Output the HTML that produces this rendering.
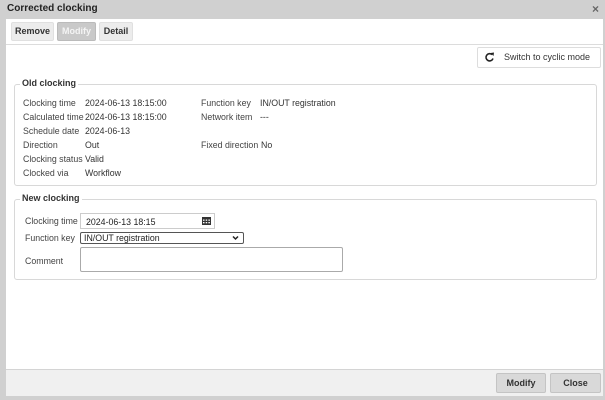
<!DOCTYPE html>
<html><head><style>
*{margin:0;padding:0;box-sizing:border-box}
body{width:605px;height:400px;background:#d0d0d0;font-family:"Liberation Sans",Arial,sans-serif;font-size:8.8px;color:#333;position:relative;overflow:hidden}
.a{position:absolute;white-space:nowrap}
.title{left:7px;top:3px;font-weight:bold;font-size:10px;color:#222}
.main{position:absolute;left:6px;top:19px;width:597px;height:350px;background:#fff}
.btn{position:absolute;background:#ececec;border:1px solid #e0e0e0;border-radius:2px;font-weight:bold;color:#333;text-align:center;line-height:17px;font-size:9px}
.fs{position:absolute;border:1px solid #d8d8d8;border-radius:3px}
.lg{position:absolute;background:#fff;padding:0 2px;font-weight:bold;color:#333;font-size:9px}
.lb{color:#444}
</style></head><body>
<div class="a title">Corrected clocking</div>
<div class="a" style="left:592px;top:2px;font-size:12px;font-weight:bold;color:#666">×</div>
<div class="main">
  <div class="btn" style="left:5px;top:3px;width:43px;height:19px">Remove</div>
  <div class="btn" style="left:51px;top:3px;width:39px;height:19px;background:#c9c9c9;border-color:#bbb;color:#f4f4f4">Modify</div>
  <div class="btn" style="left:93px;top:3px;width:34px;height:19px">Detail</div>
  <div style="position:absolute;left:0;top:25px;width:597px;height:1px;background:#dcdcdc"></div>
  <div class="btn" style="left:471px;top:28px;width:124px;height:21px;background:#fff;border-color:#ddd;font-weight:normal;line-height:19px;text-align:left;padding-left:26px;color:#333">Switch to cyclic mode</div>
  <svg class="a" style="left:478px;top:33px" width="12" height="11" viewBox="0 0 12 11"><path d="M9 6.5A3.6 3.6 0 1 1 8 2.6" fill="none" stroke="#222" stroke-width="1.6"/><path d="M6.5 1L10 0.5 9.5 4z" fill="#222"/></svg>
</div>
<div class="fs" style="left:14px;top:84px;width:583px;height:102px"></div>
<div class="a lg" style="left:20px;top:78px">Old clocking</div>
<div class="a lb" style="left:23px;top:98px">Clocking time</div><div class="a" style="left:85px;top:98px">2024-06-13 18:15:00</div>
<div class="a lb" style="left:23px;top:112px">Calculated time</div><div class="a" style="left:85px;top:112px">2024-06-13 18:15:00</div>
<div class="a lb" style="left:23px;top:126px">Schedule date</div><div class="a" style="left:85px;top:126px">2024-06-13</div>
<div class="a lb" style="left:23px;top:140px">Direction</div><div class="a" style="left:85px;top:140px">Out</div>
<div class="a lb" style="left:23px;top:154px">Clocking status</div><div class="a" style="left:85px;top:154px">Valid</div>
<div class="a lb" style="left:23px;top:168px">Clocked via</div><div class="a" style="left:85px;top:168px">Workflow</div>
<div class="a lb" style="left:201px;top:98px">Function key</div><div class="a" style="left:260px;top:98px">IN/OUT registration</div>
<div class="a lb" style="left:201px;top:112px">Network item</div><div class="a" style="left:260px;top:112px">---</div>
<div class="a lb" style="left:201px;top:140px">Fixed direction</div><div class="a" style="left:261px;top:140px">No</div>

<div class="fs" style="left:14px;top:199px;width:583px;height:81px"></div>
<div class="a lg" style="left:20px;top:193px">New clocking</div>
<div class="a lb" style="left:25px;top:216px">Clocking time</div>
<div class="a" style="left:80px;top:213px;width:135px;height:16px;border:1px solid #ccc;padding:3px 0 0 5px;color:#222">2024-06-13 18:15</div>
<svg class="a" style="left:202px;top:216px" width="9" height="9" viewBox="0 0 9 9"><rect x="0" y="1" width="9" height="8" fill="#333"/><g fill="#fff"><rect x="1" y="3.5" width="1.5" height="1.3"/><rect x="3.7" y="3.5" width="1.5" height="1.3"/><rect x="6.4" y="3.5" width="1.5" height="1.3"/><rect x="1" y="6" width="1.5" height="1.3"/><rect x="3.7" y="6" width="1.5" height="1.3"/><rect x="6.4" y="6" width="1.5" height="1.3"/></g></svg>
<div class="a lb" style="left:25px;top:233px">Function key</div>
<div class="a" style="left:80px;top:232px;width:164px;height:12px;border:1px solid #555;border-radius:2px;padding:0 0 0 3px;line-height:10px;color:#222">IN/OUT registration</div>
<svg class="a" style="left:232px;top:235px" width="7" height="6" viewBox="0 0 7 6"><path d="M1 1.5L3.5 4 6 1.5" fill="none" stroke="#222" stroke-width="1.5"/></svg>
<div class="a lb" style="left:25px;top:256px">Comment</div>
<div class="a" style="left:80px;top:247px;width:263px;height:25px;border:1px solid #aaa;border-radius:2px"></div>

<div style="position:absolute;left:6px;top:369px;width:597px;height:27px;background:#f0f0f0;border-top:1px solid #d4d4d4"></div>
<div class="btn" style="left:496px;top:373px;width:50px;height:20px;background:#d9d9d9;border-color:#c4c4c4;line-height:18px">Modify</div>
<div class="btn" style="left:550px;top:373px;width:51px;height:20px;background:#d9d9d9;border-color:#c4c4c4;line-height:18px">Close</div>
</body></html>
